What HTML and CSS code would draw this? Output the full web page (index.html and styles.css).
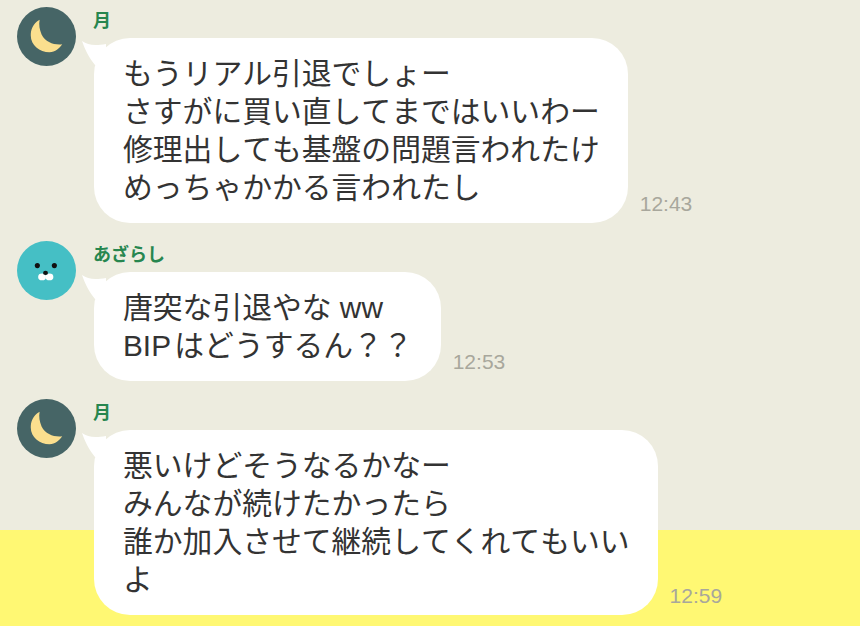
FILE: index.html
```html
<!DOCTYPE html>
<html lang="ja">
<head>
<meta charset="utf-8">
<title>チャット</title>
<link rel="stylesheet" href="styles.css">
</head>
<body>
<main class="chat">
  <article class="msg">
    <svg class="avatar" viewBox="0 0 60 60"><circle cx="30" cy="30" r="30" fill="#466566"/><path d="M23 13 C16 17 14 23 14 29 C14 39 23 46 33 46 C39 46 43 42 46 38 C38 39 29 36 25 28 C23 23 22 18 23 13 Z" fill="#fbdf8e"/></svg>
    <div class="body">
      <div class="name">月</div>
      <div class="line">
        <div class="bubble">
          <svg class="tail" viewBox="0 0 24 24"><path d="M0 0 C6 4 12 5 24 3 L24 24 L13 24 C8 18 3 9 0 0 Z" fill="#fff"/></svg>
          <p>もうリアル引退でしょー<br>さすがに買い直してまではいいわー<br>修理出しても基盤の問題言われたけ<br>めっちゃかかる言われたし</p>
        </div>
        <time class="time">12:43</time>
      </div>
    </div>
  </article>
  <article class="msg">
    <svg class="avatar" viewBox="0 0 60 60"><circle cx="30" cy="30" r="30" fill="#45bfc5"/><ellipse cx="25.5" cy="36.5" rx="4" ry="3.4" fill="#fff"/><ellipse cx="33" cy="36.5" rx="4" ry="3.4" fill="#fff"/><circle cx="20.7" cy="25" r="2.6" fill="#111"/><circle cx="38" cy="25" r="2.6" fill="#111"/><ellipse cx="29" cy="32.5" rx="2.5" ry="2.2" fill="#111"/></svg>
    <div class="body">
      <div class="name">あざらし</div>
      <div class="line">
        <div class="bubble">
          <svg class="tail" viewBox="0 0 24 24"><path d="M0 0 C6 4 12 5 24 3 L24 24 L13 24 C8 18 3 9 0 0 Z" fill="#fff"/></svg>
          <p>唐突な引退やな<span class="latin latin-wide"> ww</span><br><span class="latin">BIP </span>はどうするん？？</p>
        </div>
        <time class="time">12:53</time>
      </div>
    </div>
  </article>
  <article class="msg">
    <svg class="avatar" viewBox="0 0 60 60"><circle cx="30" cy="30" r="30" fill="#466566"/><path d="M23 13 C16 17 14 23 14 29 C14 39 23 46 33 46 C39 46 43 42 46 38 C38 39 29 36 25 28 C23 23 22 18 23 13 Z" fill="#fbdf8e"/></svg>
    <div class="body">
      <div class="name">月</div>
      <div class="line">
        <div class="bubble">
          <svg class="tail" viewBox="0 0 24 24"><path d="M0 0 C6 4 12 5 24 3 L24 24 L13 24 C8 18 3 9 0 0 Z" fill="#fff"/></svg>
          <p>悪いけどそうなるかなー<br>みんなが続けたかったら<br>誰か加入させて継続してくれてもいい<br>よ</p>
        </div>
        <time class="time">12:59</time>
      </div>
    </div>
  </article>
</main>
</body>
</html>
```
FILE: styles.css
```css
html, body {
  margin: 0;
  height: 100%;
}
body {
  background: linear-gradient(#edecdf 0, #edecdf 530px, #fff873 530px);
  font-family: "Noto Sans CJK JP", "Liberation Sans", sans-serif;
  overflow: hidden;
}
.chat {
  display: flex;
  flex-direction: column;
  gap: 18px;
  padding: 7px 0 0 17px;
}
.msg {
  display: flex;
  gap: 18px;
}
.avatar {
  width: 59px;
  height: 59px;
  flex: none;
}
.body {
  display: flex;
  flex-direction: column;
}
.name {
  height: 31px;
  margin-left: -1px;
  font-size: 18px;
  line-height: 24px;
  font-weight: 700;
  color: #27864f;
}
.line {
  display: flex;
  align-items: flex-end;
  gap: 11px;
}
.bubble {
  position: relative;
  background: #fff;
  border-radius: 36px;
  padding: 14px 28px 19px 29px;
}
.bubble p {
  margin: 0;
  font-size: 29.8px;
  line-height: 38px;
  color: #333;
  white-space: nowrap;
  font-kerning: none;
}
.latin {
  font-family: "Liberation Sans", sans-serif;
  line-height: 0;
  word-spacing: -5px;
}
.latin-wide {
  word-spacing: 0;
}
.tail {
  position: absolute;
  left: -12px;
  top: 3px;
  width: 24px;
  height: 24px;
}
.time {
  font-family: "Liberation Sans", sans-serif;
  font-size: 21px;
  line-height: 24px;
  color: #a8a79c;
  margin: 0 0 7px 1px;
}
```
